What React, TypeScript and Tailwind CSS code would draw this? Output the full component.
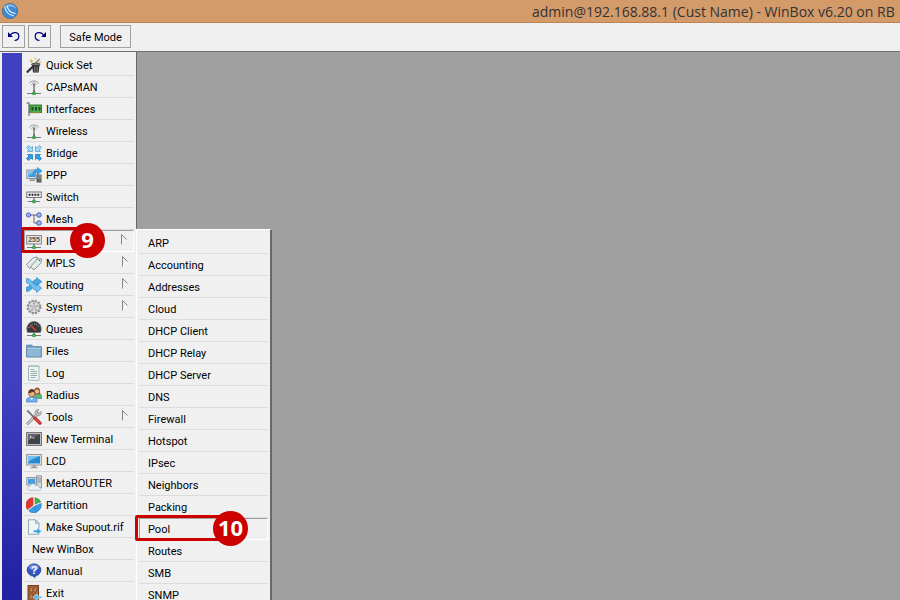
import type { ReactNode } from "react";

const Icon = ({ children }: { children?: ReactNode }) => (
  <svg viewBox="0 0 16 16" className="h-4 w-4 shrink-0" aria-hidden="true">
    {children}
  </svg>
);

const Stand = () => (
  <>
    <path d="M8 11v3" stroke="#555" strokeWidth="1" />
    <path d="M1 14.500h14" stroke="#777" strokeWidth="1" />
    <rect x="6.500" y="13" width="3" height="3" rx="1" fill="#35c34a" stroke="#217a31" strokeWidth=".5" />
  </>
);

const WandIcon = () => (
  <Icon>
    <path d="M6 7.500h7.500l-.8 8H7z" fill="#2d2d2d" />
    <ellipse cx="9.800" cy="7.400" rx="4.400" ry="1.300" fill="#777" stroke="#222" strokeWidth=".6" />
    <path d="M8.500 9.500v5.500M10 9.500v5.500M11.500 9.500v5.500" stroke="#999" strokeWidth=".6" />
    <path d="M.8 15.500L8 8.500" stroke="#333" strokeWidth="2.200" />
    <path d="M9 6.500L13.500 2" stroke="#777" strokeWidth="1.200" />
    <path d="M5.500 1.500l.7 1.800 1.800.7-1.800.7-.7 1.800-.7-1.800L3 4l1.800-.7zM9.500 0l.4 1.200 1.200.4-1.200.4-.4 1.200-.4-1.200-1.200-.4 1.200-.4zM14 3.500l.4 1.100 1.100.4-1.100.4-.4 1.100-.4-1.100-1.100-.4 1.100-.4z" fill="#e0b72f" />
  </Icon>
);

const AntennaIcon = () => (
  <Icon>
    <path d="M3.500 4.500C4.500 1.200 11.500 1.200 12.500 4.500M5.500 5.500C6 3.500 10 3.500 10.500 5.500" fill="none" stroke="#999" strokeWidth="1" />
    <path d="M8 6v7" stroke="#888" strokeWidth="1.600" />
    <circle cx="8" cy="6" r="1.200" fill="#777" />
    <Stand />
  </Icon>
);

const CardIcon = () => (
  <Icon>
    <path d="M.5 2h2.500v13" fill="none" stroke="#8b8b8b" strokeWidth="1.600" />
    <rect x="3.900" y="4" width="11.700" height="7.500" fill="#4fae50" stroke="#236728" strokeWidth=".8" />
    <path d="M5.500 6h2v3.500h-2zM9 6h2v3.500H9zM12.500 6h2v3.500h-2z" fill="#1d4f20" />
    <path d="M5 11.900h9" stroke="#c4b44a" strokeWidth="1.200" strokeDasharray="1 .6" />
  </Icon>
);

const BridgeIcon = () => (
  <Icon>
    <g fill="#9bd8fa" stroke="#4a9bd0" strokeWidth=".7">
      <path d="M6.500 1.500v5H1.500l1.500-1.500L.4 2.600 2.600.4 5 3z" />
      <path d="M9.500 1.500v5h5l-1.500-1.500 2.600-2.400L13.400.4 11 3z" />
    </g>
    <g fill="#2f9de6" stroke="#1973b5" strokeWidth=".7">
      <path d="M6.500 14.500v-5h-5L3 11 .4 13.400l2.200 2.200L5 13z" />
      <path d="M9.500 14.500v-5h5L13 11l2.600 2.400-2.200 2.200L11 13z" />
    </g>
  </Icon>
);

const PppIcon = () => (
  <Icon>
    <rect x=".8" y="3" width="10.400" height="8.500" fill="#dfe3e6" stroke="#8d9296" strokeWidth="1" />
    <rect x="2.200" y="4.300" width="7.600" height="5.800" fill="#3d9fe4" />
    <path d="M2.200 4.300h7.600L2.200 8.500z" fill="#83c4f0" />
    <path d="M3.500 13.200h5.500" stroke="#999" strokeWidth="1.800" />
    <rect x="10.500" y="7.500" width="5" height="8" fill="#535b60" />
    <path d="M11 9h4M11 11h4" stroke="#bbb" strokeWidth=".8" />
    <path d="M13 13h1.500" stroke="#42c64e" />
    <path d="M7.500 5.500C8 2.500 10 2.300 11.500 2.400V.4L16 4l-4.500 3.400V5.200C10 5 9 5 7.500 6z" fill="#35a5ed" stroke="#1b76b7" strokeWidth=".5" />
  </Icon>
);

const SwitchIcon = () => (
  <Icon>
    <rect x=".7" y="3" width="14.600" height="5.500" fill="#eee" stroke="#777" />
    <path d="M2.700 5.700h11" stroke="#222" strokeWidth="2" strokeDasharray="1.800 1.100" />
    <path d="M8 9v3" stroke="#666" />
    <path d="M2 12.500h12" stroke="#777" />
    <rect x="6.500" y="11" width="3" height="3" rx="1" fill="#35c34a" stroke="#217a31" strokeWidth=".5" />
  </Icon>
);

const MeshIcon = () => (
  <Icon>
    <path d="M4 4h8M8 4v8h4" fill="none" stroke="#666" strokeWidth="1" />
    <g fill="#9db6f5" stroke="#3c57ad" strokeWidth=".9">
      <circle cx="2.500" cy="4" r="2.100" />
      <circle cx="13" cy="4" r="2.300" />
      <circle cx="13" cy="12" r="2.300" />
    </g>
  </Icon>
);

const IpIcon = () => (
  <Icon>
    <rect x=".6" y="2.500" width="14.800" height="8.500" fill="#e4e4e4" stroke="#888" />
    <text x="8" y="9.300" textAnchor="middle" fontSize="7" fontWeight="700" fill="#555" fontFamily="Liberation Sans, sans-serif">255</text>
    <Stand />
  </Icon>
);

const TagsIcon = () => (
  <Icon>
    <g fill="#e3ecec" stroke="#7f8c8e" strokeWidth=".9">
      <path d="M.6 9.500L7.500 2.500l3.800-.3-.2 3.600-7.500 7.700z" />
      <path d="M4.500 11.500L11.500 4l3.900-.3-.3 4L8 15z" />
    </g>
    <circle cx="13.500" cy="5.500" r=".8" fill="#526064" />
  </Icon>
);

const RoutingIcon = () => (
  <Icon>
    <path d="M.5 10.200c4 .2 5.300-7.600 10-7.600V.4L15.700 4.700l-5.200 4.500V7C8 7 6.200 14.500.5 14.500z" fill="#4aa9e5" stroke="#2479b6" strokeWidth=".6" />
    <path d="M.5 1.600c5.700 0 7 7.200 10 7.200V6.600l5.200 4.500-5.200 4.500v-2.300C6 13.300 4.500 6 .5 5.900z" fill="#6fc2f2" stroke="#2479b6" strokeWidth=".6" />
  </Icon>
);

const GearIcon = () => (
  <Icon>
    <circle cx="8" cy="8" r="6.400" fill="none" stroke="#8c8c8c" strokeWidth="2" strokeDasharray="2 1.351" />
    <circle cx="8" cy="8" r="5.700" fill="#dadada" stroke="#8c8c8c" strokeWidth=".8" />
    <g fill="#999">
      <circle cx="8" cy="4.600" r="1" />
      <circle cx="11.300" cy="7" r="1" />
      <circle cx="10" cy="10.800" r="1" />
      <circle cx="6" cy="10.800" r="1" />
      <circle cx="4.700" cy="7" r="1" />
    </g>
    <circle cx="8" cy="8" r="1.300" fill="#eee" stroke="#888" strokeWidth=".7" />
  </Icon>
);

const GaugeIcon = () => (
  <Icon>
    <path d="M1.500 11.500C-.8 5.500 3 .5 8 .5s8.800 5 6.500 11z" fill="#383838" stroke="#777" strokeWidth=".8" />
    <path d="M3 7C3.500 1.700 12.500 1.700 13 7" fill="none" stroke="#ccc" strokeDasharray=".8 1.500" />
    <path d="M4.500 4.500l5.500 5" stroke="#ee433f" strokeWidth="1.200" />
    <Stand />
  </Icon>
);

const FolderIcon = () => (
  <Icon>
    <path d="M.6 14V2.200h5.400L7.200 3.700h8.200V14z" fill="#6d9bbf" stroke="#527e9f" strokeWidth=".9" />
    <path d="M1.200 5h13.600v8.500H1.200z" fill="#8fb7d5" />
    <path d="M1.200 5.200h13.600" stroke="#bfd9e9" strokeWidth=".8" />
  </Icon>
);

const LogIcon = () => (
  <Icon>
    <path d="M2.500 1h10.500v14.300h-10.500z" fill="#edf6f5" stroke="#9cb0ac" strokeWidth=".9" />
    <path d="M3 1.200h9.500" stroke="#92aaa6" strokeWidth="1.300" strokeDasharray="1 .7" />
    <path d="M4.500 4.500h4M4.500 6.500h6.500M4.500 8.500h6.500M4.500 10.500h6.500M4.500 12.500h5" stroke="#8ba39f" strokeWidth=".9" />
  </Icon>
);

const PeopleIcon = () => (
  <Icon>
    <path d="M8 10c0-5 8-4 8 0v1.500H8z" fill="#55b77c" stroke="#338656" strokeWidth=".6" />
    <path d="M7.700 7C7-1 14-1 14 3.500c0 2 .5 3 .5 4z" fill="#a65332" />
    <circle cx="11" cy="4.500" r="2.100" fill="#efbd92" />
    <path d="M.5 15v-2c0-4 10.500-4 10.500 0v2z" fill="#73b3ef" stroke="#3c7fbd" strokeWidth=".7" />
    <circle cx="5.800" cy="6.500" r="3.200" fill="#e7b280" stroke="#87522e" strokeWidth=".7" />
    <path d="M2.500 6.500C1.500.5 10 .5 9.100 6.500L7.500 4.800z" fill="#5e3c26" />
    <path d="M4.500 11l1.200 2 1.300-2z" fill="#fff" />
  </Icon>
);

const ToolsIcon = () => (
  <Icon>
    <path d="M2 14.200l9.500-9.500" stroke="#858585" strokeWidth="3" strokeLinecap="round" />
    <path d="M2 14.200l9.500-9.500" stroke="#d7d7d7" strokeWidth="1.400" strokeLinecap="round" />
    <path d="M14.800 2.500l-2.200 2.300-1.800-1.600 2.100-2.300C10.500-.1 8.400 2.300 9.500 5l1.600 1.700c2.400.9 4.900-1.500 3.700-4.200z" fill="#ccc" stroke="#808080" strokeWidth=".8" />
    <path d="M1.200 1.500l7.300 7.300" stroke="#777" strokeWidth="1.900" />
    <path d="M9 9.200l5 5" stroke="#c52a2a" strokeWidth="3.200" strokeLinecap="round" />
    <path d="M9.200 9l4.500 4.500" stroke="#ef6562" strokeWidth="1" />
  </Icon>
);

const TerminalIcon = () => (
  <Icon>
    <rect x=".5" y="1.500" width="15" height="13" fill="#bbb" stroke="#777" />
    <rect x="2" y="3" width="12" height="10" fill="#414249" />
    <path d="M2 3h12L2 10z" fill="#62636b" />
    <path d="M3.800 4.800l1.600 1.100-1.600 1.100M6.500 7h2" fill="none" stroke="#fff" strokeWidth=".8" />
  </Icon>
);

const LcdIcon = () => (
  <Icon>
    <rect x=".6" y="1.500" width="14.800" height="10.500" fill="#dfe3e6" stroke="#8f9699" strokeWidth="1" />
    <rect x="2" y="3" width="12" height="7.500" fill="#258bd2" />
    <path d="M2 3h12C10 5 5 6 2 9.500z" fill="#71c0ef" />
    <path d="M6.700 12.200h2.600v1.500h2v1.500H4.700v-1.500h2z" fill="#999" />
  </Icon>
);

const RouterIcon = () => (
  <Icon>
    <rect x="10.500" y=".8" width="4.900" height="12" fill="#d3d7da" stroke="#858a8e" strokeWidth=".8" />
    <path d="M11 3h4M11 5h4M11 7h4" stroke="#70767a" strokeWidth=".7" />
    <rect x=".8" y="2.500" width="9.400" height="7.500" fill="#e3e6e8" stroke="#8c959b" />
    <rect x="2" y="3.700" width="7" height="5.200" fill="#459ee0" />
    <path d="M4 15.300c-3.500 0-3.500-4 0-4C4.500 8 9 8 9.600 10.700c2-1.100 3.500.2 3.400 1.500 3 0 2.800 3.100.5 3.100z" fill="#edf2f8" stroke="#a1afbc" strokeWidth=".7" />
  </Icon>
);

const PieIcon = () => (
  <Icon>
    <path d="M7.300 8.200V.7a7.300 7.300 0 00-5.900 11.800z" fill="#e13832" stroke="#b72521" strokeWidth=".5" />
    <path d="M8.800 7.300V.8a7 7 0 016 4.200z" fill="#46ae4c" stroke="#2d8235" strokeWidth=".5" />
    <path d="M9 8.500l6.100-2.500a7.400 7.400 0 01-6.400 9.300z" fill="#389be5" stroke="#246eac" strokeWidth=".5" />
    <path d="M8 9l3 6A7.300 7.300 0 012.300 13.500z" fill="#389be5" stroke="#246eac" strokeWidth=".5" />
    <path d="M8 8.500V.5M8 8.500l7.500-3M8 8.500l-6 5" stroke="#f0f0f0" strokeWidth=".8" />
  </Icon>
);

const SupoutIcon = () => (
  <Icon>
    <path d="M2.500.8h7l3.500 3.500v11H2.500z" fill="#eef5f7" stroke="#8ba0aa" strokeWidth=".9" />
    <path d="M9.500.8v3.500H13z" fill="#c7d8df" stroke="#8ba0aa" strokeWidth=".7" />
    <path d="M7.500 11h3.500V8.800l4.700 3.500-4.700 3.400v-2.200H7.500z" fill="#3ca3df" stroke="#d9f0fa" strokeWidth=".6" />
  </Icon>
);

const ManualIcon = () => (
  <Icon>
    <ellipse cx="8" cy="7" rx="6.900" ry="6.200" fill="#3159bd" stroke="#223d91" strokeWidth=".7" />
    <path d="M6 12l3 3.600.7-3.300z" fill="#294eac" />
    <ellipse cx="8" cy="4.200" rx="5" ry="2.800" fill="#6b8ddc" />
    <text x="8" y="10.800" textAnchor="middle" fontSize="11" fontWeight="700" fill="white" fontFamily="Liberation Sans, sans-serif">?</text>
  </Icon>
);

const ExitIcon = () => (
  <Icon>
    <rect x="2" y=".5" width="10.500" height="15" fill="#a66436" stroke="#713d20" />
    <path d="M4 2.500h2.500v4.500H4zM8 2.500h2.500v4.500H8zM4 9h2.500v5H4zM8 9h2.500v5H8z" fill="#c48650" stroke="#7d4727" strokeWidth=".6" />
    <path d="M15.800 11.200h-4.500V8.800L6.800 12.300l4.500 3.400v-2.500h4.500z" fill="#52b4ea" stroke="#e1f2fb" strokeWidth=".6" />
  </Icon>
);

const LogoIcon = () => (
  <svg viewBox="0 0 16 16" className="ml-[2px] h-4 w-4 shrink-0" aria-hidden="true">
    <circle cx="8" cy="8" r="7.600" fill="#3d8bd6" stroke="#235791" strokeWidth=".6" />
    <path d="M2 5C5-1 13 1 14.500 6 11 3 6 3 2 5z" fill="#86bbea" />
    <path d="M2.500 3.500c1 5 4 8.500 9.500 9.500M5 3c1 4 4 7 8.500 7.500" fill="none" stroke="#eef8ff" strokeWidth="1.100" />
  </svg>
);

const UndoIcon = ({ flipped = false }: { flipped?: boolean }) => (
  <svg viewBox="0 0 12 11" className={flipped ? "h-[11px] w-3 -scale-x-100" : "h-[11px] w-3"} aria-hidden="true">
    <path d="M0 1v5h5z" fill="#000080" />
    <path d="M2.500 3.800C5 .5 10.800 1 10.800 5.200c0 2.200-1.600 4-4.300 4.300" fill="none" stroke="#000080" strokeWidth="1.200" />
  </svg>
);

const Arrow = () => (
  <svg viewBox="0 0 6 11" className="mr-[6px] mb-[3px] ml-auto h-[11px] w-[6px]" aria-hidden="true">
    <path d="M.5 10.500L5.500 5.500" stroke="#fff" />
    <path d="M.5 10.500V.5l5 5" fill="none" stroke="#858585" />
  </svg>
);

type Item = { label: string; icon?: ReactNode; arrow?: boolean };

const items: Item[] = [
  { label: "Quick Set", icon: <WandIcon /> },
  { label: "CAPsMAN", icon: <AntennaIcon /> },
  { label: "Interfaces", icon: <CardIcon /> },
  { label: "Wireless", icon: <AntennaIcon /> },
  { label: "Bridge", icon: <BridgeIcon /> },
  { label: "PPP", icon: <PppIcon /> },
  { label: "Switch", icon: <SwitchIcon /> },
  { label: "Mesh", icon: <MeshIcon /> },
  { label: "IP", icon: <IpIcon />, arrow: true },
  { label: "MPLS", icon: <TagsIcon />, arrow: true },
  { label: "Routing", icon: <RoutingIcon />, arrow: true },
  { label: "System", icon: <GearIcon />, arrow: true },
  { label: "Queues", icon: <GaugeIcon /> },
  { label: "Files", icon: <FolderIcon /> },
  { label: "Log", icon: <LogIcon /> },
  { label: "Radius", icon: <PeopleIcon /> },
  { label: "Tools", icon: <ToolsIcon />, arrow: true },
  { label: "New Terminal", icon: <TerminalIcon /> },
  { label: "LCD", icon: <LcdIcon /> },
  { label: "MetaROUTER", icon: <RouterIcon /> },
  { label: "Partition", icon: <PieIcon /> },
  { label: "Make Supout.rif", icon: <SupoutIcon /> },
  { label: "New WinBox" },
  { label: "Manual", icon: <ManualIcon /> },
  { label: "Exit", icon: <ExitIcon /> },
];

const ipItems = [
  "ARP", "Accounting", "Addresses", "Cloud", "DHCP Client", "DHCP Relay",
  "DHCP Server", "DNS", "Firewall", "Hotspot", "IPsec", "Neighbors",
  "Packing", "Pool", "Routes", "SMB", "SNMP",
];

const Badge = ({ children }: { children: ReactNode }) => (
  <span className="flex h-[35px] w-[35px] items-center justify-center rounded-full bg-[#cc0000] pb-[2px] font-['Noto_Sans',sans-serif] text-[22px] font-bold text-white">
    {children}
  </span>
);

const IpMenu = () => (
  <ul className="absolute -top-px left-[112px] w-[136px] border-t border-r-2 border-l border-t-white border-r-[#696969] border-l-white bg-[#f0f0f0] px-[2px] pt-[2px]">
    {ipItems.map((label) => (
      <li key={label} className="relative">
        <button
          type="button"
          className={
            label === "Pool"
              ? "flex h-[22px] w-full items-center border border-t-[#a0a0a0] border-r-white border-b-white border-l-[#a0a0a0] pl-2"
              : "flex h-[22px] w-full items-center border-b border-[#dcdcdc] pl-[9px]"
          }
        >
          <span className="pt-[2px]">{label}</span>
        </button>
        {label === "Pool" && (
          <div className="pointer-events-none absolute -top-[3px] -left-[4px] flex h-[26px] w-[95px] items-center rounded-xs border-3 border-[#cc0000]">
            <div className="absolute left-[75px]">
              <Badge>10</Badge>
            </div>
          </div>
        )}
      </li>
    ))}
  </ul>
);

const Sidebar = () => (
  <nav className="relative z-10 w-[115px] shrink-0 border-r border-[#696969] px-[2px] pt-[2px]">
    <ul>
      {items.map(({ label, icon, arrow }) => (
        <li key={label} className="relative">
          <button
            type="button"
            className={
              label === "IP"
                ? "flex h-[22px] w-[110px] items-center gap-1 border border-t-[#a0a0a0] border-r-white border-b-white border-l-[#a0a0a0] pl-px"
                : icon
                  ? "flex h-[22px] w-[110px] items-center gap-1 border-b border-[#dcdcdc] pl-[2px]"
                  : "flex h-[22px] w-[110px] items-center border-b border-[#dcdcdc] pl-2"
            }
          >
            {icon}
            <span className="pt-[2px]">{label}</span>
            {arrow && <Arrow />}
          </button>
          {label === "IP" && (
            <>
              <IpMenu />
              <div className="pointer-events-none absolute -top-[3px] -left-[3px] flex h-[26px] w-[66px] items-center rounded-xs border-3 border-[#cc0000]">
                <div className="absolute left-[46px]">
                  <Badge>9</Badge>
                </div>
              </div>
            </>
          )}
        </li>
      ))}
    </ul>
  </nav>
);

export default function App() {
  return (
    <div className="flex h-screen flex-col overflow-hidden bg-[#f0f0f0] font-['Roboto',sans-serif] text-[11px] leading-4 whitespace-nowrap text-black">
      <header className="flex h-[23px] shrink-0 items-center justify-between overflow-hidden border-b border-[#bd8357] bg-[#d39a6a]">
        <LogoIcon />
        <h1 className="w-[368px] shrink-0 pt-[2px] font-['Open_Sans',sans-serif] text-[14px] leading-5 text-[#333]">
          admin@192.168.88.1 (Cust Name) - WinBox v6.20 on RB
        </h1>
      </header>
      <div className="flex h-[29px] shrink-0 items-center gap-[3px] border-b border-[#707070] px-[2px] pb-px">
        <button type="button" aria-label="Undo" className="flex h-[23px] w-[23px] items-center justify-center border border-[#a0a0a0] bg-[#f0f0f0]">
          <UndoIcon />
        </button>
        <button type="button" aria-label="Redo" className="flex h-[23px] w-[23px] items-center justify-center border border-[#a0a0a0] bg-[#f0f0f0]">
          <UndoIcon flipped />
        </button>
        <button type="button" className="ml-1.5 flex h-[23px] w-[71px] items-center justify-center border border-[#a0a0a0] bg-[#f0f0f0]">
          <span className="pt-[2px]">Safe Mode</span>
        </button>
      </div>
      <div className="flex min-h-0 flex-1 pl-[2px]">
        <div className="mt-px w-5 shrink-0 bg-linear-to-b from-[#4040c0] from-60% to-[#2020a0]" />
        <Sidebar />
        <main className="flex-1 bg-[#a0a0a0]" />
      </div>
    </div>
  );
}
